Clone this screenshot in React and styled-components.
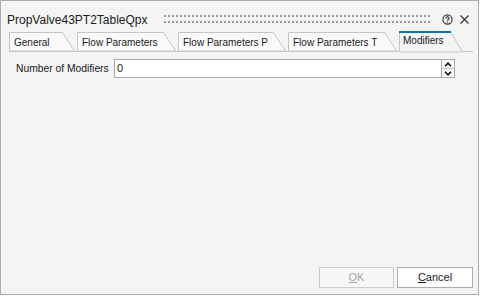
import React from "react";
import styled, { createGlobalStyle } from "styled-components";

const Global = createGlobalStyle`
  html, body { margin: 0; padding: 0; background: #ffffff; }
  body { font-family: "Liberation Sans", Arial, sans-serif; color: #1a1a1a; }
  * { box-sizing: border-box; }
`;

const Window = styled.div`
  width: 479px;
  height: 295px;
  border: 1px solid #acacac;
  background: #f4f4f4;
  display: flex;
  flex-direction: column;
`;

const TitleBar = styled.div`
  height: 30px;
  padding: 6px 9px 0 6px;
  display: flex;
  align-items: center;
`;

const Title = styled.div`
  font-size: 12px;
  line-height: 14px;
  color: #202020;
  white-space: nowrap;
  padding-top: 1px;
`;

const Grip = styled.div`
  flex: 1;
  height: 8px;
  margin: 0 11px 0 16px;
  background-image: linear-gradient(90deg, #9c9c9c 2px, transparent 2px),
    linear-gradient(90deg, #9c9c9c 2px, transparent 2px);
  background-size: 4px 2px, 4px 2px;
  background-position: 0 0, 0 6px;
  background-repeat: repeat-x;
`;

const IconBtn = styled.div`
  width: ${(p) => p.$w}px;
  height: 11px;
  margin-left: ${(p) => p.$ml || 0}px;
  display: flex;
  align-items: center;
  justify-content: center;
`;

const TabBar = styled.div`
  height: 21px;
  margin: 0 5px 0 8px;
  border-bottom: 1px solid #c9c9c9;
  display: flex;
  align-items: flex-end;
  gap: 2px;
`;

const TabBox = styled.div`
  position: relative;
  width: ${(p) => p.$w}px;
  height: ${(p) => (p.$active ? 21 : 19)}px;
  margin-bottom: ${(p) => (p.$active ? -1 : 0)}px;
  padding: ${(p) => (p.$active ? 4 : 5)}px 0 0 ${(p) => (p.$active ? 4 : 5)}px;
  font-size: 10px;
  line-height: 12px;
  color: #1a1a1a;
  white-space: nowrap;
`;

const TabShape = styled.svg`
  position: absolute;
  left: 0;
  top: 0;
  overflow: visible;
`;

const TabLabel = styled.span`
  position: relative;
`;

const Content = styled.div`
  flex: 1;
  padding: 7px 23px 0 15px;
`;

const FieldRow = styled.div`
  display: flex;
  align-items: center;
  height: 19px;
`;

const FieldLabel = styled.div`
  width: 98px;
  font-size: 10.3px;
  line-height: 12px;
  padding-top: 1px;
  white-space: nowrap;
`;

const Input = styled.div`
  flex: 1;
  height: 19px;
  border: 1px solid #a9a9a9;
  background: #ffffff;
  font-size: 11px;
  line-height: 17px;
  padding-left: 2px;
`;

const Spinner = styled.div`
  width: 14px;
  height: 19px;
  margin-left: -1px;
  border: 1px solid #a9a9a9;
  background: #ffffff;
  display: flex;
  flex-direction: column;
`;

const SpinBtn = styled.div`
  flex: 1;
  display: flex;
  align-items: center;
  justify-content: center;
  background: #f7f7f7;
  border-top: ${(p) => (p.$down ? "1px solid #c4c4c4" : "none")};
`;

const Footer = styled.div`
  display: flex;
  justify-content: flex-end;
  gap: 3px;
  padding: 0 5px 6px 0;
`;

const Button = styled.div`
  width: ${(p) => p.$w}px;
  height: 21px;
  border: 1px solid ${(p) => (p.$disabled ? "#cdcdcd" : "#adadad")};
  background: ${(p) => (p.$disabled ? "#f7f7f7" : "#fdfdfd")};
  color: ${(p) => (p.$disabled ? "#a3a3a3" : "#1a1a1a")};
  font-size: 11px;
  line-height: 19px;
  text-align: center;
`;

function Tab({ label, w, active }) {
  const h = active ? 21 : 19;
  const pts = `0.5,${h} 0.5,0.5 ${w - 12.5},0.5 ${w - 0.5},${h}`;
  return (
    <TabBox $w={w} $active={active}>
      <TabShape width={w} height={h}>
        <polygon points={pts} fill={active ? "#f4f4f4" : "#fafafa"} stroke="#c6c6c6" strokeWidth="1" />
        {active && <rect x="0" y="0" width={w - 12} height="2" fill="#1372a6" />}
      </TabShape>
      <TabLabel>{label}</TabLabel>
    </TabBox>
  );
}

const tabs = [
  { label: "General", w: 66 },
  { label: "Flow Parameters", w: 99 },
  { label: "Flow Parameters P", w: 108 },
  { label: "Flow Parameters T", w: 109 },
  { label: "Modifiers", w: 64, active: true },
];

export default function App() {
  return (
    <>
      <Global />
      <Window>
        <TitleBar>
          <Title>PropValve43PT2TableQpx</Title>
          <Grip />
          <IconBtn $w={11}>
            <svg width="11" height="11" viewBox="0 0 11 11">
              <circle cx="5.5" cy="5.5" r="4.6" fill="none" stroke="#333" strokeWidth="1.1" />
              <path d="M3.9 4.4 C3.9 3.4 4.6 2.9 5.5 2.9 C6.4 2.9 7.1 3.5 7.1 4.3 C7.1 5.2 5.6 5.4 5.6 6.5" fill="none" stroke="#333" strokeWidth="1.1" />
              <rect x="5" y="7.4" width="1.2" height="1.2" fill="#333" />
            </svg>
          </IconBtn>
          <IconBtn $w={9} $ml={7}>
            <svg width="9" height="9" viewBox="0 0 9 9">
              <path d="M0.5 0.5 L8.5 8.5 M8.5 0.5 L0.5 8.5" stroke="#333" strokeWidth="1.1" />
            </svg>
          </IconBtn>
        </TitleBar>
        <TabBar>
          {tabs.map((t) => (
            <Tab key={t.label} {...t} />
          ))}
        </TabBar>
        <Content>
          <FieldRow>
            <FieldLabel>Number of Modifiers</FieldLabel>
            <Input>0</Input>
            <Spinner>
              <SpinBtn>
                <svg width="8" height="5" viewBox="0 0 8 5">
                  <path d="M1 4.2 L4 1.2 L7 4.2" fill="none" stroke="#111" strokeWidth="1.6" />
                </svg>
              </SpinBtn>
              <SpinBtn $down>
                <svg width="8" height="5" viewBox="0 0 8 5">
                  <path d="M1 0.8 L4 3.8 L7 0.8" fill="none" stroke="#111" strokeWidth="1.6" />
                </svg>
              </SpinBtn>
            </Spinner>
          </FieldRow>
        </Content>
        <Footer>
          <Button $w={75} $disabled>
            <u>O</u>K
          </Button>
          <Button $w={76}>
            <u>C</u>ancel
          </Button>
        </Footer>
      </Window>
    </>
  );
}
